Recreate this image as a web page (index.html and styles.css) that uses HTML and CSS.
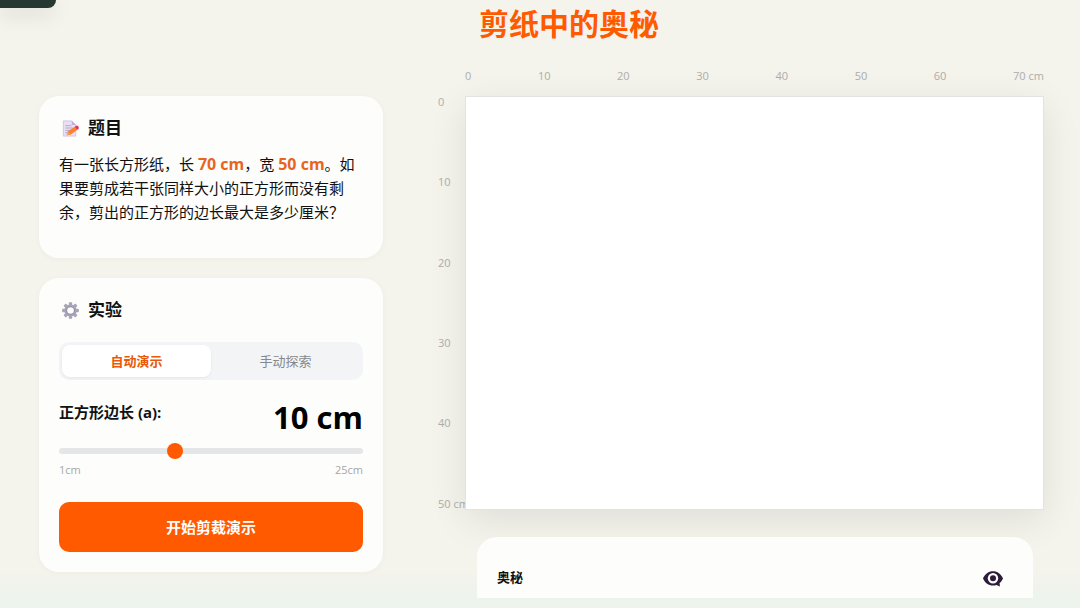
FILE: index.html
```html
<!DOCTYPE html>
<html lang="zh-CN">
<head>
<meta charset="utf-8">
<meta name="viewport" content="width=device-width, initial-scale=1">
<title>剪纸中的奥秘</title>
<link rel="stylesheet" href="styles.css">
</head>
<body>
<div class="corner-tab"></div>
<div class="page">
  <aside class="sidebar">
    <section class="card problem">
      <h2 class="card-title">
        <svg class="title-icon" viewBox="0 0 20 20" aria-hidden="true">
          <path d="M2.5 2h8.800l4.200 4.200V18h-13z" fill="#e9e1f3" stroke="#c9b9de" stroke-width=".8"/>
          <path d="M11.300 2v4.200h4.200z" fill="#c4a9df"/>
          <path d="M4.500 7h6.500M4.500 9.500h8M4.500 12h5M4.500 14.500h2.500" stroke="#b3a4ca" stroke-width="1"/>
          <path d="M6 17.200l1.300-4.200 7.600-5.200 2.500 3.600-7.500 5.200z" fill="#ff8228"/>
          <path d="M6 17.200l1.300-4.200 2.600 3.600z" fill="#f9a05c"/>
          <path d="M14.500 8.100l1.500-1q1.400-.5 2.300.8t.2 2.500l-1.500 1z" fill="#e8315f"/>
        </svg>
        题目
      </h2>
      <p class="problem-text">有一张长方形纸，长 <strong>70 cm</strong>，宽 <strong>50 cm</strong>。如果要剪成若干张同样大小的正方形而没有剩余，剪出的正方形的边长最大是多少厘米？</p>
    </section>
    <section class="card lab">
      <h2 class="card-title">
        <svg class="title-icon" viewBox="0 0 20 20" aria-hidden="true">
          <g fill="#a9a5b8">
            <rect x="8.200" y="1.200" width="3.600" height="17.600" rx="1"/>
            <rect x="8.200" y="1.200" width="3.600" height="17.600" rx="1" transform="rotate(45 10 10)"/>
            <rect x="8.200" y="1.200" width="3.600" height="17.600" rx="1" transform="rotate(90 10 10)"/>
            <rect x="8.200" y="1.200" width="3.600" height="17.600" rx="1" transform="rotate(135 10 10)"/>
            <circle cx="10" cy="10" r="6.400"/>
          </g>
          <circle cx="10" cy="10" r="4.600" fill="#928ca8"/>
          <circle cx="10" cy="10" r="3.500" fill="#fdfdfb"/>
        </svg>
        实验
      </h2>
      <div class="modes">
        <button class="mode active" type="button">自动演示</button>
        <button class="mode" type="button">手动探索</button>
      </div>
      <div class="side-row">
        <label for="side">正方形边长 (a):</label>
        <output class="side-value" for="side">10 cm</output>
      </div>
      <input class="slider" id="side" type="range" min="1" max="25" value="10">
      <div class="limits"><span>1cm</span><span>25cm</span></div>
      <button class="start" type="button">开始剪裁演示</button>
    </section>
  </aside>
  <main class="stage">
    <h1 class="page-title">剪纸中的奥秘</h1>
    <div class="board-grid">
      <div class="x-axis"><span>0</span><span>10</span><span>20</span><span>30</span><span>40</span><span>50</span><span>60</span><span>70 cm</span></div>
      <div class="y-axis"><span>0</span><span>10</span><span>20</span><span>30</span><span>40</span><span>50 cm</span></div>
      <div class="paper"></div>
    </div>
    <section class="secret">
      <h2 class="secret-title">奥秘</h2>
      <button class="reveal" type="button" aria-label="显示奥秘">
        <svg class="eye" viewBox="0 0 20 16" aria-hidden="true">
          <path d="M0 7.500C2 3 5.500.3 10 .3S18 3 20 7.500c-.8 1.900-1.900 3.400-3.400 4.600l.3 3.500-3.400-1.600c-1.100.4-2.300.6-3.500.6-4.500 0-8-2.700-10-7.100z" fill="#2d1b3d"/>
          <circle cx="10" cy="7.300" r="5.200" fill="#fdfdfb"/>
          <circle cx="10" cy="7.300" r="3" fill="#2d1b3d"/>
        </svg>
      </button>
    </section>
  </main>
</div>
</body>
</html>
```
FILE: styles.css
```css
* {
  box-sizing: border-box;
}

body {
  margin: 0;
  min-height: 100vh;
  background: linear-gradient(to top, #edf3ed 0, #edf3ed 10px, #f4f3ec 36px);
  color: #111;
  font-family: "Open Sans", "Noto Sans CJK SC", sans-serif;
  font-size: 15px;
  line-height: 24px;
}

h1, h2, p {
  margin: 0;
}

button {
  border: 0;
  padding: 0;
  font: inherit;
  cursor: pointer;
}

.corner-tab {
  position: absolute;
  top: 0;
  left: 0;
  width: 56px;
  height: 8px;
  border-radius: 0 0 8px 0;
  background: #253832;
  box-shadow: 0 6px 20px rgba(0, 0, 0, 0.14);
}

.page {
  display: grid;
  grid-template-columns: minmax(280px, 344px) minmax(0, 1fr);
  gap: 55px;
  height: calc(100vh - 10px);
  padding: 0 36px 0 39px;
  overflow: hidden;
}

.sidebar {
  display: flex;
  flex-direction: column;
  gap: 20px;
  padding-top: 96px;
}

.card {
  padding: 20px;
  border-radius: 20px;
  background: #fdfdfb;
  box-shadow: 0 1px 6px rgba(0, 0, 0, 0.03);
}

.problem {
  padding-bottom: 34px;
}

.card-title {
  display: flex;
  align-items: center;
  gap: 8px;
  padding-left: 2px;
  font-size: 17px;
  line-height: 24px;
}

.title-icon {
  width: 19px;
  height: 19px;
}

.problem-text {
  margin-top: 12px;
}

.problem-text strong {
  color: #e8641f;
  font-size: 16px;
}

.modes {
  display: grid;
  grid-template-columns: 1fr 1fr;
  margin-top: 20px;
  padding: 3px;
  border-radius: 10px;
  background: #f2f4f6;
}

.mode {
  height: 32px;
  border-radius: 8px;
  background: transparent;
  color: #85888c;
  font-size: 13px;
}

.mode.active {
  background: #fff;
  color: #e8590c;
  font-weight: 700;
  box-shadow: 0 1px 3px rgba(0, 0, 0, 0.06);
}

.side-row {
  display: flex;
  justify-content: space-between;
  margin-top: 20px;
  font-weight: 700;
}

.side-value {
  color: #000;
  font-size: 31px;
  line-height: 34px;
}

.slider {
  appearance: none;
  display: block;
  width: 100%;
  height: 6px;
  margin: 14px 0 0;
  border-radius: 3px;
  background: #e5e6e8;
}

.slider::-webkit-slider-thumb {
  appearance: none;
  width: 16px;
  height: 16px;
  border-radius: 50%;
  background: #ff5a00;
}

.limits {
  display: flex;
  justify-content: space-between;
  margin-top: 8px;
  color: #a5a7aa;
  font-size: 11px;
  line-height: 16px;
}

.start {
  width: 100%;
  height: 50px;
  margin-top: 24px;
  border-radius: 10px;
  background: #ff5a00;
  color: #fff;
  font-weight: 700;
}

.page-title {
  padding-left: 41px;
  color: #ff5a00;
  font-size: 30px;
  line-height: 48px;
}

.board-grid {
  display: grid;
  grid-template-columns: 27px minmax(0, 1fr);
  row-gap: 12px;
  margin-top: 20px;
  color: #acaeab;
  font-size: 11px;
  line-height: 16px;
}

.x-axis {
  grid-column: 2;
  display: flex;
  justify-content: space-between;
}

.y-axis {
  display: flex;
  flex-direction: column;
  justify-content: space-between;
  overflow: hidden;
  line-height: 12px;
  white-space: nowrap;
}

.paper {
  aspect-ratio: 7 / 5;
  border: 1px solid #e3e3e1;
  background: #fff;
  box-shadow: 0 10px 36px rgba(0, 0, 0, 0.09);
}

.secret {
  position: relative;
  display: flex;
  justify-content: space-between;
  align-items: center;
  height: 80px;
  margin: 27px 11px 0 39px;
  padding: 0 30px 0 20px;
  border-radius: 20px;
  background: #fdfdfb;
}

.secret-title {
  font-size: 13px;
}

.reveal {
  display: flex;
  padding-top: 4px;
  background: transparent;
}

.eye {
  width: 20px;
  height: 16px;
}
```
